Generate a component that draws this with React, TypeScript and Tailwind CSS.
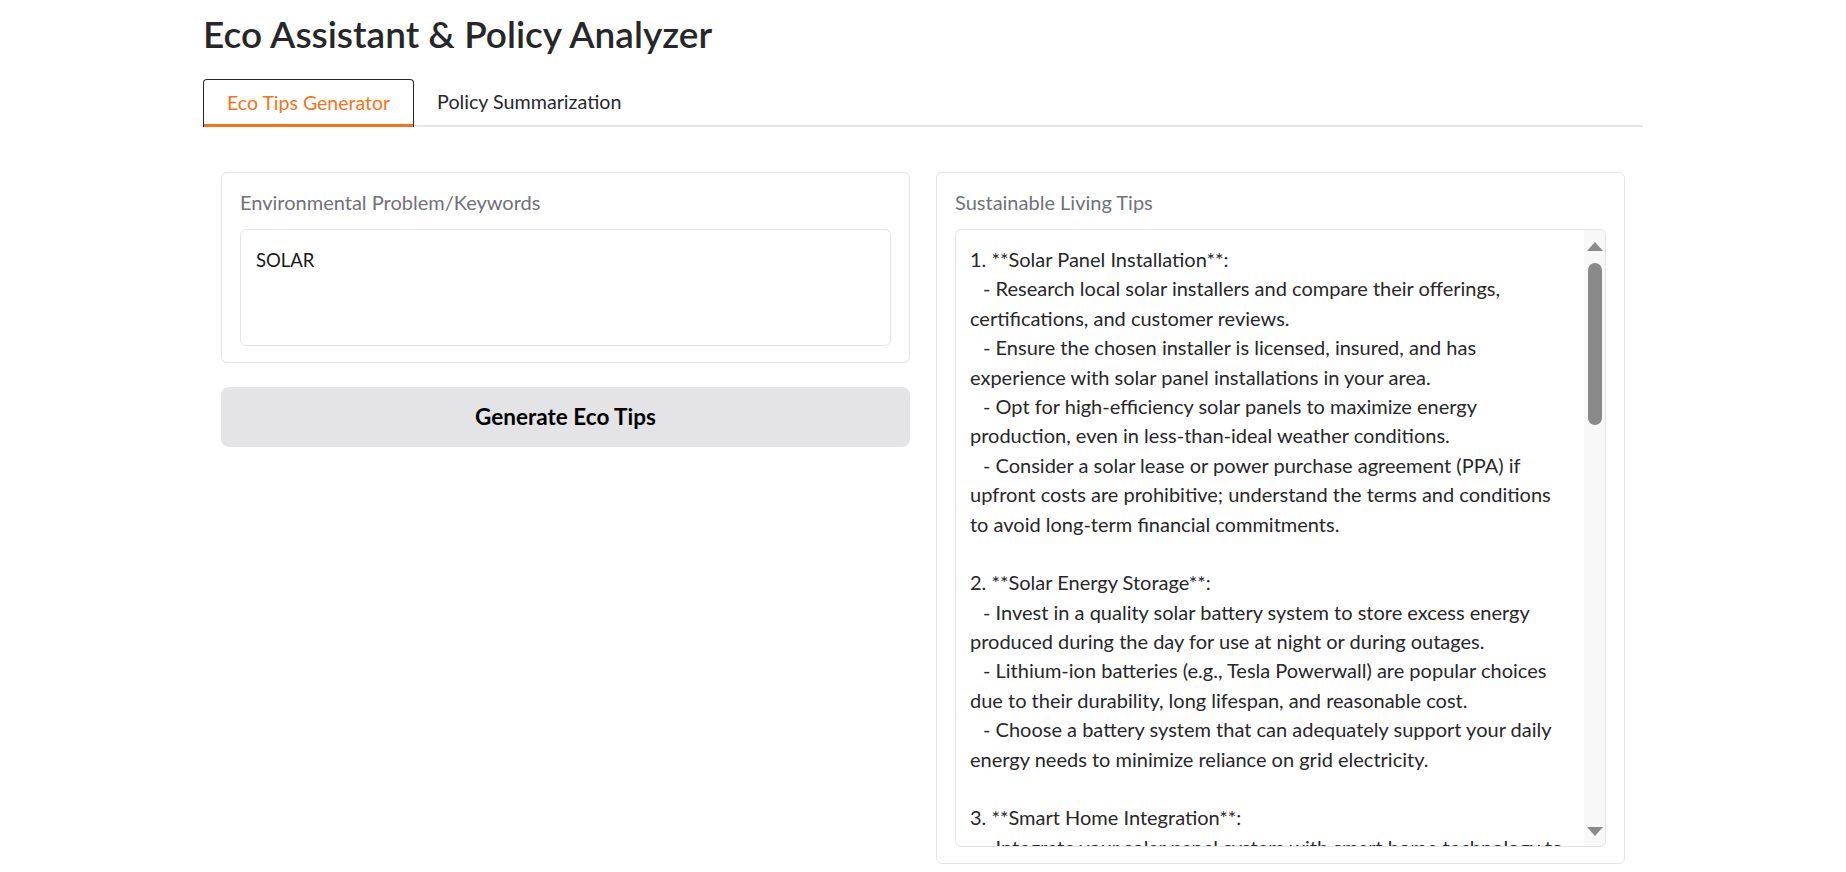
import React from 'react';

const tips: { text: string; indent?: boolean }[] = [
  { text: '1. **Solar Panel Installation**:' },
  { text: '- Research local solar installers and compare their offerings,', indent: true },
  { text: 'certifications, and customer reviews.' },
  { text: '- Ensure the chosen installer is licensed, insured, and has', indent: true },
  { text: 'experience with solar panel installations in your area.' },
  { text: '- Opt for high-efficiency solar panels to maximize energy', indent: true },
  { text: 'production, even in less-than-ideal weather conditions.' },
  { text: '- Consider a solar lease or power purchase agreement (PPA) if', indent: true },
  { text: 'upfront costs are prohibitive; understand the terms and conditions' },
  { text: 'to avoid long-term financial commitments.' },
  { text: '' },
  { text: '2. **Solar Energy Storage**:' },
  { text: '- Invest in a quality solar battery system to store excess energy', indent: true },
  { text: 'produced during the day for use at night or during outages.' },
  { text: '- Lithium-ion batteries (e.g., Tesla Powerwall) are popular choices', indent: true },
  { text: 'due to their durability, long lifespan, and reasonable cost.' },
  { text: '- Choose a battery system that can adequately support your daily', indent: true },
  { text: 'energy needs to minimize reliance on grid electricity.' },
  { text: '' },
  { text: '3. **Smart Home Integration**:' },
  { text: '- Integrate your solar panel system with smart home technology to', indent: true },
];

const Scrollbar = () => (
  <div className="flex w-[21px] shrink-0 flex-col items-center bg-[#f8f8f8] pt-[12px] pb-[10px]">
    <div className="h-0 w-0 border-x-[8px] border-b-[9px] border-x-transparent border-b-[#8a8a8a]" />
    <div className="mt-[12px] h-[162px] w-[14px] rounded-full bg-[#8a8a8a]" />
    <div className="flex-1" />
    <div className="h-0 w-0 border-x-[8px] border-t-[9px] border-x-transparent border-t-[#8a8a8a]" />
  </div>
);

export default function App() {
  return (
    <div
      className="min-h-screen bg-white text-[#27272a]"
      style={{ fontFamily: 'Lato, "Noto Sans", sans-serif' }}
    >
      <div className="mx-auto w-[1440px] pt-[10px]">
        <h1 className="text-[37px] font-semibold leading-[48px] text-[#27272a]">
          Eco Assistant &amp; Policy Analyzer
        </h1>

        {/* Tabs */}
        <div className="mt-[21px] flex border-b-2 border-[#e5e7eb]">
          <button className="-mb-[2px] h-[48px] rounded-t-[4px] border border-b-0 border-[#27272a] px-[23px] pb-[2px] text-[19.5px] text-[#f97316] shadow-[inset_0_-3px_0_#f97316]">
            Eco Tips Generator
          </button>
          <button className="h-[46px] px-[23px] text-[19.7px] text-[#27272a]">
            Policy Summarization
          </button>
        </div>

        {/* Eco Tips tab */}
        <div className="mt-[45px] grid grid-cols-2 gap-[26px] px-[18px]">
          <div className="flex flex-col gap-[24px]">
            <div className="rounded-[6px] border border-[#e4e4e7] px-[18px] pt-[16px] pb-[16px]">
              <div className="text-[20px] leading-[26px] text-[#71717a]">
                Environmental Problem/Keywords
              </div>
              <div className="mt-[14px] h-[117px] rounded-[6px] border border-[#e4e4e7] px-[15px] pt-[16px] text-[18.5px] leading-[28px] text-[#18181b]">
                SOLAR
              </div>
            </div>
            <button className="h-[60px] rounded-[8px] bg-[#e4e4e7] text-[22.5px] font-bold text-black">
              Generate Eco Tips
            </button>
          </div>

          <div className="rounded-[6px] border border-[#e4e4e7] px-[18px] pt-[16px] pb-[16px]">
            <div className="text-[20px] leading-[26px] text-[#71717a]">
              Sustainable Living Tips
            </div>
            <div className="mt-[14px] flex h-[618px] overflow-hidden rounded-[6px] border border-[#e4e4e7]">
              <div className="flex-1 overflow-hidden pl-[14px] pt-[15px] text-[20px] leading-[29.4px] text-[#27272a]">
                {tips.map((line, i) => (
                  <div
                    key={i}
                    className={`h-[29.4px] whitespace-pre ${line.indent ? 'pl-[13px]' : ''}`}
                  >
                    {line.text}
                  </div>
                ))}
              </div>
              <Scrollbar />
            </div>
          </div>
        </div>
      </div>
    </div>
  );
}
